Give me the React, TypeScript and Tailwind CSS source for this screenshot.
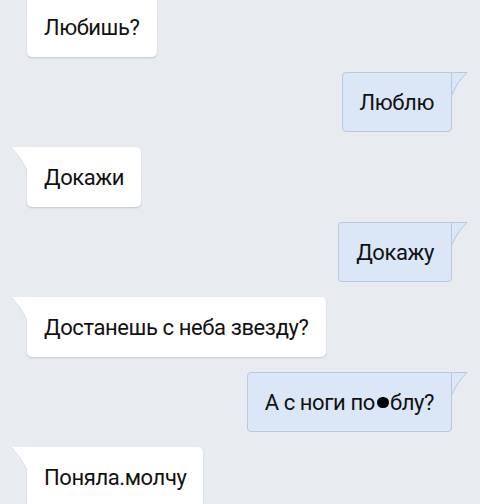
import { ReactNode } from "react";

type Msg = { text: ReactNode; mine?: boolean };

const messages: Msg[] = [
  { text: "Любишь?" },
  { text: "Люблю", mine: true },
  { text: "Докажи" },
  { text: "Докажу", mine: true },
  { text: "Достанешь с неба звезду?" },
  {
    text: (
      <>
        А с ноги по
        <span className="inline-block w-[12px] h-[11px] ml-[2px] mr-[1px] rounded-full bg-black align-[-1px]" />
        блу?
      </>
    ),
    mine: true,
  },
  { text: "Поняла.молчу" },
];

function Bubble({ text, mine, tail }: Msg & { tail: boolean }) {
  return (
    <div className={`relative h-[60px] flex items-center ${mine ? "self-end mr-[28px]" : "self-start ml-[27px]"}`}>
      {tail && !mine && (
        <svg className="absolute left-[-16px] top-0" width="17" height="24" viewBox="0 0 17 24">
          <path d="M16 0 L0 0 Q10 10 16 23 Z" fill="#ffffff" />
          <path d="M0 0 Q10 10 16 23" fill="none" stroke="#d9dee5" strokeWidth="1" />
        </svg>
      )}
      {tail && mine && (
        <svg className="absolute right-[-16px] top-0" width="17" height="24" viewBox="0 0 17 24">
          <path d="M1 0.5 L16 0.5 Q6 10 1 23 Z" fill="#dbe7f7" />
          <path d="M1 0.5 L16 0.5 Q6 10 1 23" fill="none" stroke="#b9c8dc" strokeWidth="1" />
        </svg>
      )}
      <div
        className={`h-full flex items-center px-[17px] text-[22px] tracking-[-0.4px] text-[#111] ${
          mine
            ? "bg-[#dbe7f7] border border-[#b9c8dc] rounded-[4px] rounded-tr-none"
            : `bg-white rounded-[5px] shadow-[0_1px_2px_rgba(120,135,155,0.35)] ${tail ? "rounded-tl-none" : ""}`
        }`}
      >
        {text}
      </div>
    </div>
  );
}

export default function App() {
  return (
    <div
      className="w-[480px] h-[504px] overflow-hidden bg-[#e8ecf1]"
      style={{ fontFamily: "Roboto, 'Noto Sans', sans-serif" }}
    >
      <div className="flex flex-col gap-[15px] mt-[-3px]">
        {messages.map((m, i) => (
          <Bubble key={i} {...m} tail={i > 0} />
        ))}
      </div>
    </div>
  );
}
